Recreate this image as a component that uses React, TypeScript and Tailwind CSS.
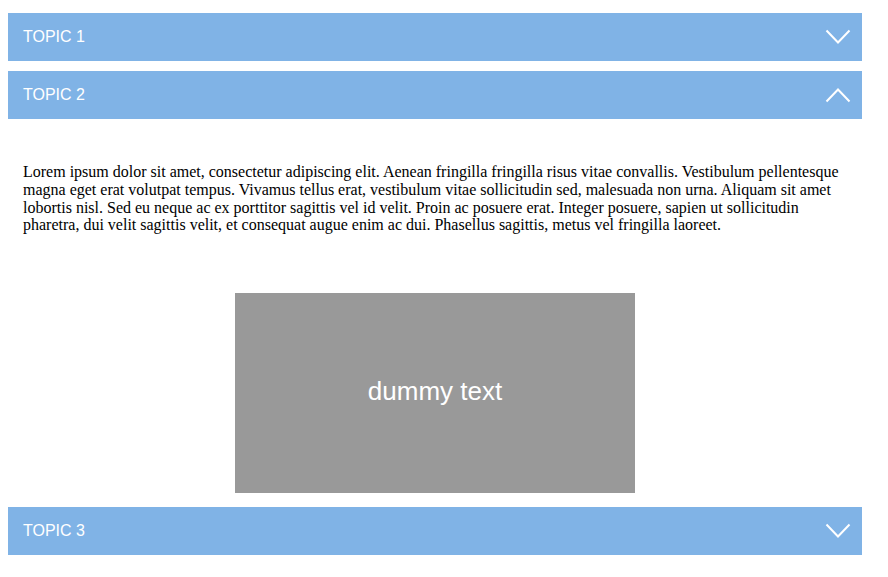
const paragraph =
  "Lorem ipsum dolor sit amet, consectetur adipiscing elit. Aenean fringilla fringilla risus vitae convallis. Vestibulum pellentesque magna eget erat volutpat tempus. Vivamus tellus erat, vestibulum vitae sollicitudin sed, malesuada non urna. Aliquam sit amet lobortis nisl. Sed eu neque ac ex porttitor sagittis vel id velit. Proin ac posuere erat. Integer posuere, sapien ut sollicitudin pharetra, dui velit sagittis velit, et consequat augue enim ac dui. Phasellus sagittis, metus vel fringilla laoreet.";

function Chevron({ open }: { open: boolean }) {
  return (
    <svg width="26" height="16" viewBox="0 0 26 16" className="mr-[11px]">
      <polyline
        points={open ? "1.5,14.5 13,2.5 24.5,14.5" : "1.5,1.5 13,13.5 24.5,1.5"}
        fill="none"
        stroke="white"
        strokeWidth="2"
      />
    </svg>
  );
}

function TopicBar({ title, open }: { title: string; open: boolean }) {
  return (
    <div className="flex h-[48px] w-[854px] items-center justify-between bg-[#80b3e6] pl-[15px] text-white">
      <span className="text-[16px]">{title}</span>
      <Chevron open={open} />
    </div>
  );
}

export default function App() {
  return (
    <div className="min-h-[577px] bg-white px-2 pt-[13px] font-['Liberation_Sans',Arial,sans-serif]">
      <TopicBar title="TOPIC 1" open={false} />
      <div className="mt-[10px]">
        <TopicBar title="TOPIC 2" open={true} />
      </div>
      <div className="w-[854px] px-[15px] pt-[44px]">
        <p className="font-['Liberation_Serif','Times_New_Roman',serif] text-[16px] leading-[17.75px] text-black">
          {paragraph}
        </p>
        <div className="mx-auto mt-[59px] flex h-[200px] w-[400px] items-center justify-center bg-[#999999] pb-[4px]">
          <span className="text-[26px] text-white">dummy text</span>
        </div>
      </div>
      <div className="mt-[14px]">
        <TopicBar title="TOPIC 3" open={false} />
      </div>
    </div>
  );
}
